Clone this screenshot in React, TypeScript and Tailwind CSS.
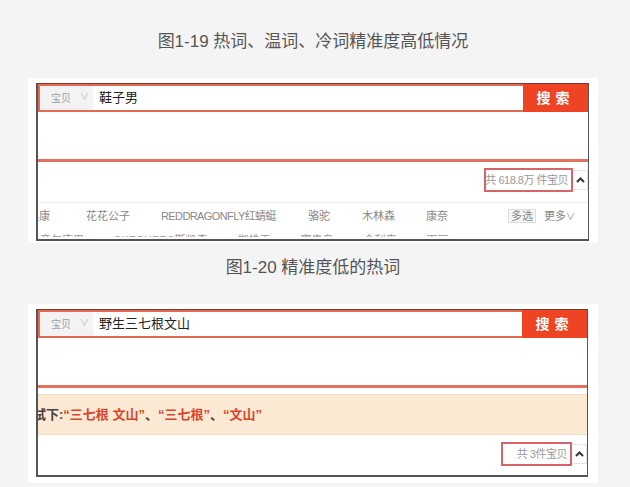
const font = { fontFamily: '"Liberation Sans", "Noto Sans CJK SC", sans-serif' };

const Caption = ({ text, className }: { text: string; className: string }) => (
  <div className={`w-[570px] text-center text-[17px] leading-[24px] text-[#555] ${className}`}>
    {text}
  </div>
);

const SearchRow = ({ query }: { query: string }) => (
  <div className="flex h-[28px]">
    <div className="flex flex-1 border-2 border-r-0 border-[#e46a52]">
      <div className="flex w-[53px] items-center bg-[#f3f3f3] pl-[11px] text-[10px] text-[#a0a0a0]">
        <span>宝贝</span>
        <span className="ml-[9px] text-[9px] text-[#b5b5b5]">∨</span>
      </div>
      <div className="flex items-center pl-[6px] text-[13px] text-[#222]">{query}</div>
    </div>
    <div className="flex w-[65px] items-center justify-center bg-[#ee4424] text-[14px] font-bold tracking-[5px] text-white">
      搜索
    </div>
  </div>
);

const CountBox = ({ text, width }: { text: string; width: string }) => (
  <div className="flex items-start">
    <div
      className={`flex h-[24px] items-center justify-end overflow-hidden whitespace-nowrap border-2 border-[#d6646a] pr-[3px] text-[11px] tracking-[-0.5px] text-[#9a9a9a] ${width}`}
    >
      {text}
    </div>
    <div className="mt-[2px] flex h-[20px] w-[15px] items-center justify-center border border-l-0 border-[#e6e6e6] text-[#333]">
      <svg width="9" height="6" viewBox="0 0 9 6">
        <path d="M1 5 L4.5 1.5 L8 5" fill="none" stroke="#333" strokeWidth="2" />
      </svg>
    </div>
  </div>
);

const Brands = () => (
  <div className="flex h-[27px] items-center overflow-hidden whitespace-nowrap text-[11px] text-[#888]">
    <span className="ml-[-10px] w-[58px] shrink-0">奥康</span>
    <span className="w-[75px] shrink-0">花花公子</span>
    <span className="w-[147px] shrink-0 tracking-[-0.6px]">REDDRAGONFLY红蜻蜓</span>
    <span className="w-[54px] shrink-0">骆驼</span>
    <span className="w-[64px] shrink-0">木林森</span>
    <span className="w-[82px] shrink-0">康奈</span>
    <span className="w-[36px] shrink-0">
      <span className="border border-[#ddd] bg-[#f7f7f7] px-[2px]">多选</span>
    </span>
    <span className="shrink-0">更多<span className="text-[9px]">∨</span></span>
  </div>
);

export default function App() {
  return (
    <div className="h-[487px] w-[630px] overflow-hidden bg-[#f4f4f4] pl-[28px]" style={font}>
      <Caption text="图1-19 热词、温词、冷词精准度高低情况" className="h-[78px] pt-[30px]" />

      <div className="h-[165px] w-[570px] bg-white pl-[8px] pt-[5px]">
        <div className="h-[158px] w-[553px] overflow-hidden border-t border-r border-b-2 border-l-2 border-t-[#7a3a2e] border-r-[#555] border-b-[#555] border-l-[#555]">
          <SearchRow query="鞋子男" />
          <div className="h-[47px]" />
          <div className="h-[3px] bg-[#e2715d]" />
          <div className="flex h-[40px] justify-end pt-[6px]">
            <CountBox text="共 618.8万 件宝贝" width="w-[89px]" />
          </div>
          <div className="h-px bg-[#eeeeee]" />
          <Brands />
          <div className="flex h-[7px] gap-[30px] overflow-hidden whitespace-nowrap pl-[2px] pt-[4px] text-[11px] leading-[12px] text-[#999]">
            <span>意尔康男</span>
            <span>SKECHERS斯凯奇</span>
            <span>蜘蛛王</span>
            <span>富贵鸟</span>
            <span>金利来</span>
            <span>百丽</span>
          </div>
        </div>
      </div>

      <Caption text="图1-20 精准度低的热词" className="h-[61px] pt-[13px]" />

      <div className="h-[179px] w-[570px] bg-white pl-[8px] pt-[5px]">
        <div className="h-[168px] w-[552px] overflow-hidden border-t border-r border-b-2 border-l-2 border-t-[#7a3a2e] border-r-[#555] border-b-[#555] border-l-[#555]">
          <SearchRow query="野生三七根文山" />
          <div className="h-[47px]" />
          <div className="h-[3px] bg-[#e2715d]" />
          <div className="h-[6px]" />
          <div className="flex h-[41px] items-center overflow-hidden whitespace-nowrap border-y border-[#f6dcc0] bg-[#fbe9d4] text-[13px] font-bold">
            <span className="ml-[-18px] text-[#444]">尝试下:</span>
            <span className="text-[#d8452c]">“三七根 文山”</span>
            <span className="text-[#444]">、</span>
            <span className="text-[#d8452c]">“三七根”</span>
            <span className="text-[#444]">、</span>
            <span className="text-[#d8452c]">“文山”</span>
          </div>
          <div className="flex justify-end pt-[7px]">
            <CountBox text="共 3件宝贝" width="w-[71px]" />
          </div>
        </div>
      </div>
    </div>
  );
}
